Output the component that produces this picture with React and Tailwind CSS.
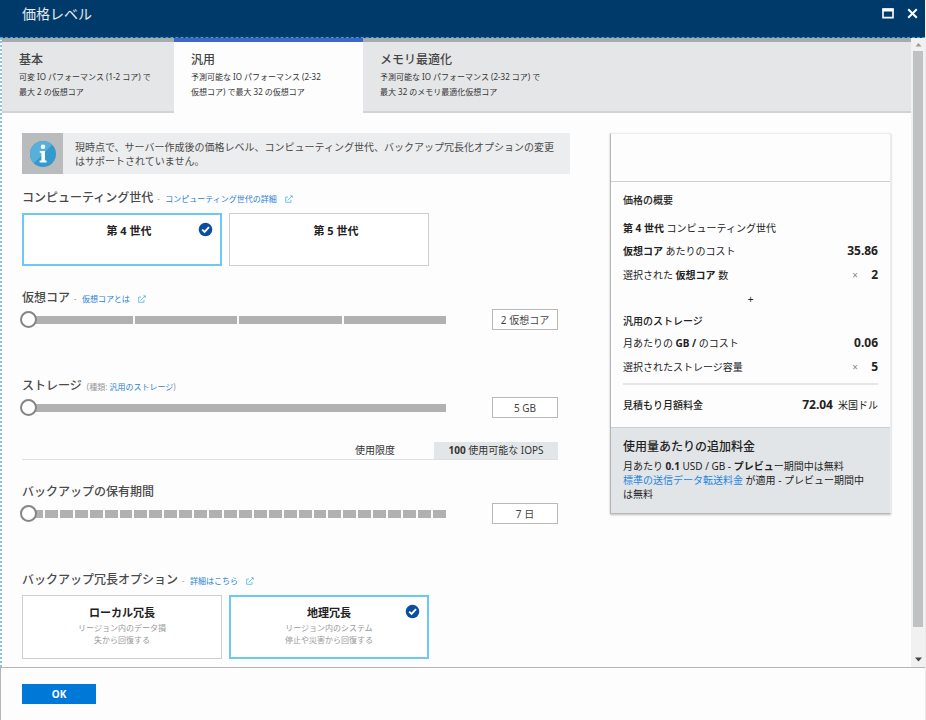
import React from "react";

function ExternalIcon() {
  return (
    <svg width="8" height="8" viewBox="0 0 8 8" fill="none" stroke="#62bde2" strokeWidth="0.9" aria-hidden="true">
      <path d="M3 2H0.7V7.3H6V5" />
      <path d="M2.6 5.4L6.6 1.4" />
      <path d="M5 0.4H7.6V3Z" fill="#45b0dc" stroke="none" />
    </svg>
  );
}

function CheckBadge() {
  return (
    <svg
      className="absolute top-[7px] right-[7px]"
      width="15"
      height="15"
      viewBox="0 0 15 15"
      aria-hidden="true"
    >
      <circle cx="7.5" cy="7.5" r="6.8" fill="#0b4da2" />
      <path d="M4.2 7.6L6.6 10L11 5.2" fill="none" stroke="#fff" strokeWidth="1.9" />
    </svg>
  );
}

function Heading({ children, link }) {
  return (
    <div className="flex h-5 items-center whitespace-nowrap">
      <h2 className="text-[12px] font-medium text-[#4a4a4a]">{children}</h2>
      {link && (
        <div className="flex items-center pt-[2px] text-[8px]">
          <span className="w-[12px] pl-[4px] text-[#999]">-</span>
          <a href="#" className="mr-[8px] text-[#1f7fd6]">
            {link}
          </a>
          <ExternalIcon />
        </div>
      )}
    </div>
  );
}

function Slider({ label, segments, value }) {
  return (
    <div className="mt-px flex items-center gap-[46px] pr-3">
      <div className="-ml-[2px] grid flex-1 items-center">
        <div className="ml-[10px] flex h-2 gap-[2px] [grid-area:1/1]">
          {Array.from({ length: segments }, (_, i) => (
            <span key={i} className="flex-1 bg-[#b1b1b1]" />
          ))}
        </div>
        <input
          type="range"
          aria-label={label}
          min="0"
          max={segments}
          defaultValue="0"
          className="h-[17px] w-full appearance-none bg-transparent [grid-area:1/1] [&::-webkit-slider-thumb]:h-[17px] [&::-webkit-slider-thumb]:w-[17px] [&::-webkit-slider-thumb]:appearance-none [&::-webkit-slider-thumb]:rounded-full [&::-webkit-slider-thumb]:border-2 [&::-webkit-slider-thumb]:border-[#858585] [&::-webkit-slider-thumb]:bg-white"
        />
      </div>
      <input
        type="text"
        aria-label={label}
        defaultValue={value}
        className="h-[21px] w-[66px] border border-[#b9b9b9] bg-white text-center text-[10px] text-[#444]"
      />
    </div>
  );
}

function Option({ title, lines, selected }) {
  return (
    <button
      type="button"
      aria-pressed={!!selected}
      className={
        "relative flex w-[200px] flex-col items-center bg-white " +
        (lines ? "h-16 " : "h-[53px] pl-[14px] ") +
        (selected ? "border-2 border-[#6ccaf2] pt-[7px]" : "border border-[#cfcfcf] pt-[8px]")
      }
    >
      <span className="text-[11px] leading-[18px] font-bold text-[#222]">{title}</span>
      {lines && (
        <span className="text-[8px] leading-[12px] text-[#999]">
          {lines[0]}
          <br />
          {lines[1]}
        </span>
      )}
      {selected && <CheckBadge />}
    </button>
  );
}

function Tab({ title, lines, selected, className }) {
  return (
    <button
      type="button"
      role="tab"
      aria-selected={!!selected}
      className={"flex h-[75px] flex-col items-start border-t-4 pt-[9px] pl-[17px] text-left " + className}
    >
      <span className="text-[12px] leading-[18px] font-medium text-[#444]">{title}</span>
      <span className="text-[8px] leading-[15px] whitespace-nowrap text-[#333]">
        {lines[0]}
        <br />
        {lines[1]}
      </span>
    </button>
  );
}

function Row({ children, times, value }) {
  return (
    <div className="flex h-6 items-center">
      <span className="flex-1">{children}</span>
      {times && <span className="text-[#888]">×</span>}
      <b className={"text-right text-[12px] " + (times ? "w-5" : "")}>{value}</b>
    </div>
  );
}

export default function App() {
  return (
    <div className="flex min-h-screen flex-col border-r border-[#ececec] bg-[#fdfdfd] font-['Noto_Sans','Noto_Sans_CJK_JP',sans-serif] text-[10px] text-[#333]">
      <header className="flex h-[38px] items-start border-b border-dashed border-[#2aa5d6] bg-[#003a6b] pt-[3px] pr-[7px] pl-[22px] text-[#e6ebf0]">
        <h1 className="flex-1 text-[14px] leading-[22px]">価格レベル</h1>
        <button type="button" aria-label="最大化" className="mt-[5px] mr-[13px]">
          <svg width="12" height="11" viewBox="0 0 12 11" aria-hidden="true">
            <path d="M1 1H11V9.6H1Z" fill="none" stroke="#fff" strokeWidth="1.6" />
            <path d="M0.5 2H11.5" stroke="#fff" strokeWidth="3" />
          </svg>
        </button>
        <button type="button" aria-label="閉じる" className="mt-[5px]">
          <svg width="11" height="11" viewBox="0 0 11 11" aria-hidden="true">
            <path d="M1.2 1.2L9.8 9.8M9.8 1.2L1.2 9.8" stroke="#fff" strokeWidth="2" />
          </svg>
        </button>
      </header>

      <div className="flex flex-1 border-b border-b-[#b5b5b5]">
        <div className="min-w-0 flex-1 border-l-2 border-dotted border-l-[#8cc6dc]">
          <div role="tablist" className="flex">
            <Tab
              title="基本"
              lines={["可変 IO パフォーマンス (1-2 コア) で", "最大 2 の仮想コア"]}
              className="w-[172px] border-b-2 border-t-[#a6abae] border-b-[#d2d3d4] bg-[#e5e6e8]"
            />
            <Tab
              title="汎用"
              lines={["予測可能な IO パフォーマンス (2-32", "仮想コア) で最大 32 の仮想コア"]}
              selected
              className="w-[189px] border-t-[#3f65c8] bg-[#fdfdfd]"
            />
            <Tab
              title="メモリ最適化"
              lines={["予測可能な IO パフォーマンス (2-32 コア) で", "最大 32 のメモリ最適化仮想コア"]}
              className="flex-1 border-b-2 border-t-[#a6abae] border-b-[#d2d3d4] bg-[#e5e6e8]"
            />
          </div>

          <main className="flex items-start gap-10 px-5 pt-5 pb-2">
            <div className="min-w-0 flex-1">
              <div className="flex h-[41px] bg-[#ecedee]">
                <div className="flex w-[41px] items-center justify-center bg-[#b9bbbd]">
                  <svg width="28" height="28" viewBox="0 0 28 28" aria-hidden="true">
                    <circle cx="14" cy="14" r="13" fill="#3499cb" />
                    <path d="M4.8 23.2A13 13 0 0 1 23.2 4.8Z" fill="#57b0da" />
                    <circle cx="14" cy="6.8" r="2.3" fill="#fff" />
                    <path d="M10.8 11H16V20.6H17.6V22.4H10.6V20.6H12.4V12.8H10.8Z" fill="#fff" />
                  </svg>
                </div>
                <p className="flex-1 pt-[7px] pl-3 text-[10px] leading-[14px] whitespace-nowrap text-[#4a4a4a]">
                  現時点で、サーバー作成後の価格レベル、コンピューティング世代、バックアップ冗長化オプションの変更
                  <br />
                  はサポートされていません。
                </p>
              </div>

              <section className="mt-[14px]">
                <Heading link="コンピューティング世代の詳細">コンピューティング世代</Heading>
                <div className="mt-[5px] flex gap-[7px]">
                  <Option title="第 4 世代" selected />
                  <Option title="第 5 世代" />
                </div>
              </section>

              <section className="mt-[22px]">
                <Heading link="仮想コアとは">仮想コア</Heading>
                <Slider label="仮想コア" segments={4} value="2 仮想コア" />
              </section>

              <section className="mt-[46px]">
                <div className="flex h-5 items-center whitespace-nowrap">
                  <h2 className="text-[12px] font-medium text-[#4a4a4a]">ストレージ</h2>
                  <span className="pt-[2px] pl-[5px] text-[8px] text-[#999]">
                    (種類:{" "}
                    <a href="#" className="text-[#1f7fd6]">
                      汎用のストレージ
                    </a>
                    )
                  </span>
                </div>
                <Slider label="ストレージ" segments={1} value="5 GB" />
                <div className="mt-6 mr-3 flex h-[18px] items-center justify-end border-b border-[#dcdfe1] leading-[17px]">
                  <span className="mr-[39px]">使用限度</span>
                  <span className="w-[124px] bg-[#e3e6e8] text-center">
                    <b>100</b> 使用可能な IOPS
                  </span>
                </div>
              </section>

              <section className="mt-[22px]">
                <Heading>バックアップの保有期間</Heading>
                <Slider label="バックアップの保有期間" segments={28} value="7 日" />
              </section>

              <section className="mt-[46px]">
                <Heading link="詳細はこちら">バックアップ冗長オプション</Heading>
                <div className="mt-[5px] flex gap-[7px]">
                  <Option title="ローカル冗長" lines={["リージョン内のデータ損", "失から回復する"]} />
                  <Option title="地理冗長" lines={["リージョン内のシステム", "停止や災害から回復する"]} selected />
                </div>
              </section>
            </div>

            <aside className="w-[281px] border border-t-[#ececec] border-r-[#ececec] border-b-[#b5b8ba] border-l-[#b5b5b5] bg-[#fdfdfd] text-[#222] shadow-[0_1px_2px_rgba(0,0,0,0.25)]">
              <div className="h-12 border-b border-[#cfcfcf]" />
              <div className="px-3 pt-2 pb-[10px]">
                <h3 className="h-5 font-medium leading-[20px]">価格の概要</h3>
                <p className="mt-[7px] h-[22px] leading-[22px]">
                  <b>第 4 世代</b> コンピューティング世代
                </p>
                <Row value="35.86">
                  <b>仮想コア</b> あたりのコスト
                </Row>
                <Row times value="2">
                  選択された <b>仮想コア</b> 数
                </Row>
                <p className="h-6 text-center leading-[24px]">+</p>
                <h4 className="h-5 leading-[20px] font-medium">汎用のストレージ</h4>
                <Row value="0.06">
                  月あたりの <b>GB /</b> のコスト
                </Row>
                <Row times value="5">
                  選択されたストレージ容量
                </Row>
                <div className="mt-1 border-t-2 border-[#e6e6e6]" />
                <div className="mt-2 flex h-6 items-center">
                  <span className="flex-1 font-medium">見積もり月額料金</span>
                  <b className="mr-[5px] text-[12px]">72.04</b>
                  <span>米国ドル</span>
                </div>
              </div>
              <div className="border-t border-[#cdd0d2] bg-[#e2e5e8] px-3 pt-[9px] pb-3 leading-[14px] whitespace-nowrap">
                <h3 className="mb-[2px] text-[12px] leading-[20px] font-medium">使用量あたりの追加料金</h3>
                <p>
                  月あたり <b>0.1</b> USD / GB - <b>プレビュ</b>ー期間中は無料
                  <br />
                  <a href="#" className="text-[#1f86e0]">
                    標準の送信データ転送料金
                  </a>{" "}
                  が適用 - プレビュー期間中
                  <br />
                  は無料
                </p>
              </div>
            </aside>
          </main>
        </div>

        <div className="flex w-[14px] flex-col items-center bg-[#f1f1f1]" aria-hidden="true">
          <svg className="my-[4px]" width="7" height="5" viewBox="0 0 7 5">
            <path d="M0.5 4.5L3.5 1L6.5 4.5Z" fill="#9a9a9a" />
          </svg>
          <span className="w-[10px] flex-1 bg-[#bfc1c2]" />
          <svg className="mt-[30px] mb-[5px]" width="7" height="5" viewBox="0 0 7 5">
            <path d="M0 0.5L3.5 4.5L7 0.5Z" fill="#444" />
          </svg>
        </div>
      </div>

      <footer className="h-[52px] border-l border-[#b5b5b5] pt-4 pl-[21px]">
        <button type="button" className="h-5 w-[74px] bg-[#0078d7] text-[10px] font-bold text-white">
          OK
        </button>
      </footer>
    </div>
  );
}
